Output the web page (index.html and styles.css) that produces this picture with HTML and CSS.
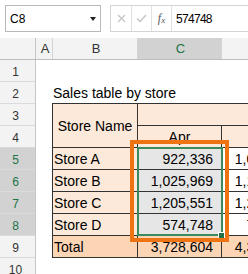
FILE: index.html
```html
<!DOCTYPE html>
<html lang="en">
<head>
    <meta charset="UTF-8">
    <title>Sales table by store</title>
    <link rel="stylesheet" href="styles.css">
</head>
<body>
<div class="toolbar">
    <div class="namebox"><span>C8</span><span class="drop"></span></div>
    <div class="formula">
        <span class="fbtn cancel">
            <svg width="9" height="9" viewBox="0 0 9 9"><path d="M1 1L8 8M8 1L1 8" stroke="#c4c4c4" stroke-width="1.2"/></svg>
        </span>
        <span class="fbtn enter">
            <svg width="11" height="9" viewBox="0 0 11 9"><path d="M1 4.5L4 7.5L10 1" fill="none" stroke="#c4c4c4" stroke-width="1.3"/></svg>
        </span>
        <span class="fbtn fx"><i>f</i><i class="x">x</i></span>
        <span class="finput">574748</span>
    </div>
</div>

<div class="colheads">
    <div class="corner"></div>
    <div class="colhead col-a">A</div>
    <div class="colhead col-b">B</div>
    <div class="colhead col-c sel">C</div>
    <div class="colhead col-d">D</div>
</div>

<div class="sheet">
    <div class="rowheads">
        <div class="rowhead">1</div>
        <div class="rowhead">2</div>
        <div class="rowhead">3</div>
        <div class="rowhead">4</div>
        <div class="rowhead sel">5</div>
        <div class="rowhead sel">6</div>
        <div class="rowhead sel">7</div>
        <div class="rowhead sel">8</div>
        <div class="rowhead">9</div>
        <div class="rowhead">10</div>
    </div>
    <div class="cells">
        <div class="blank"></div>
        <div class="title">Sales table by store</div>
        <div class="table">
            <div class="head store-name">Store Name</div>
            <div class="head month-band"></div>
            <div class="head">Apr</div>
            <div class="head">May</div>

            <div class="store">Store A</div>
            <div class="num sel">922,336</div>
            <div class="num">1,084,213</div>

            <div class="store">Store B</div>
            <div class="num sel">1,025,969</div>
            <div class="num">1,176,540</div>

            <div class="store">Store C</div>
            <div class="num sel">1,205,551</div>
            <div class="num">1,269,338</div>

            <div class="store">Store D</div>
            <div class="num sel">574,748</div>
            <div class="num">782,469</div>

            <div class="store total">Total</div>
            <div class="num total">3,728,604</div>
            <div class="num total">4,312,560</div>
        </div>
    </div>
</div>

<!-- selected range C5:C8 -->
<div class="selection"><span class="handle"></span></div>
<!-- highlight box drawn on top -->
<div class="marker"></div>
</body>
</html>
```

FILE: styles.css
```css
html, body {
    margin: 0;
    width: 248px;
    height: 274px;
    overflow: hidden;
}

body {
    position: relative;
    background: #ffffff;
    font-family: "Liberation Sans", Arial, sans-serif;
    color: #000;
}

/* Name box + formula bar */
.toolbar {
    display: flex;
    gap: 9px;
    height: 38px;
    box-sizing: border-box;
    padding: 5px 0 0 5px;
    background: #ffffff;
}

.namebox {
    flex: none;
    width: 96px;
    height: 27px;
    box-sizing: border-box;
    border: 1px solid #b9b9b9;
    display: flex;
    align-items: center;
    padding-left: 4px;
    font-size: 12px;
    line-height: 14px;
}

.namebox .drop {
    margin-left: auto;
    margin-right: 4px;
    width: 0;
    height: 0;
    border-left: 3px solid transparent;
    border-right: 3px solid transparent;
    border-top: 4px solid #222;
}

.formula {
    flex: 1;
    display: flex;
    height: 27px;
    box-sizing: border-box;
    border: 1px solid #d4d4d4;
    border-right: none;
    background: #fff;
}

.fbtn {
    flex: none;
    display: flex;
    align-items: center;
    justify-content: center;
    box-sizing: border-box;
    border-right: 1px solid #e1e1e1;
}

.fbtn.cancel { width: 21px; }
.fbtn.enter { width: 20px; }

.fbtn.fx {
    width: 20px;
    font-family: "Liberation Serif", "Times New Roman", serif;
    font-size: 12px;
    color: #555;
}

.fbtn.fx .x {
    font-size: 9px;
    margin-top: 3px;
}

.finput {
    display: flex;
    align-items: center;
    padding-left: 4px;
    font-size: 12px;
    line-height: 14px;
    letter-spacing: -0.7px;
}

/* Column headers */
.colheads {
    display: flex;
    height: 22px;
    box-sizing: border-box;
    border-bottom: 1px solid #bdbdbd;
    background: #f3f3f3;
}

.corner {
    flex: none;
    width: 36px;
    box-sizing: border-box;
    border-right: 1px solid #c6c6c6;
}

.colhead {
    flex: none;
    box-sizing: border-box;
    border-right: 1px solid #d4d4d4;
    display: flex;
    align-items: center;
    justify-content: center;
    padding-left: 2px;
    font-size: 13px;
    line-height: 15px;
    color: #333;
}

.col-a { width: 17px; }
.col-b { width: 85px; }
.col-c { width: 84px; }
.col-d { width: 84px; }

.colhead.sel {
    background: #d2d2d2;
    color: #217346;
}

/* Rows */
.sheet {
    display: flex;
}

.rowheads {
    flex: none;
    width: 36px;
    box-sizing: border-box;
    border-right: 1px solid #c6c6c6;
    background: #f3f3f3;
}

.rowhead {
    height: 22px;
    box-sizing: border-box;
    border-bottom: 1px solid #dadada;
    display: flex;
    align-items: flex-end;
    justify-content: center;
    padding: 0 4px 2px 0;
    font-size: 12px;
    line-height: 14px;
    color: #333;
}

.rowhead.sel {
    background: #d2d2d2;
    color: #217346;
}

.cells {
    flex: 1;
    min-width: 0;
    font-size: 14px;
    line-height: 16px;
}

.blank {
    height: 22px;
}

.title {
    height: 21px;
    display: flex;
    align-items: center;
    padding-left: 17px;
    white-space: nowrap;
}

/* The sales table */
.table {
    margin-left: 16px;
    display: grid;
    grid-template-columns: 85px 84px 84px;
    grid-auto-rows: 22px;
    width: max-content;
    border-top: 1px solid #333;
    border-left: 1px solid #333;
}

.table > div {
    box-sizing: border-box;
    border-right: 1px solid #333;
    border-bottom: 1px solid #333;
    display: flex;
    align-items: center;
    white-space: nowrap;
}

.table .head {
    background: #fde9d9;
    justify-content: center;
}

.table .store-name {
    grid-row: span 2;
}

.table .month-band {
    grid-column: span 2;
}

.table .store {
    background: #fde9d9;
    padding-left: 1px;
}

.table .num {
    justify-content: flex-end;
    padding-right: 8px;
}

.table .num.sel {
    background: #e6e6e6;
}

.table .total {
    background: #fcd5b4;
}

/* Overlays */
.selection {
    position: absolute;
    left: 137px;
    top: 147px;
    width: 86px;
    height: 89px;
    box-sizing: border-box;
    border: 2px solid #3d8a5f;
}

.selection .handle {
    position: absolute;
    right: -4px;
    bottom: -5px;
    width: 5px;
    height: 5px;
    background: #217346;
    border: 1px solid #fff;
}

.marker {
    position: absolute;
    left: 130px;
    top: 140px;
    width: 99px;
    height: 102px;
    box-sizing: border-box;
    border: 4px solid #ee7312;
}
```
